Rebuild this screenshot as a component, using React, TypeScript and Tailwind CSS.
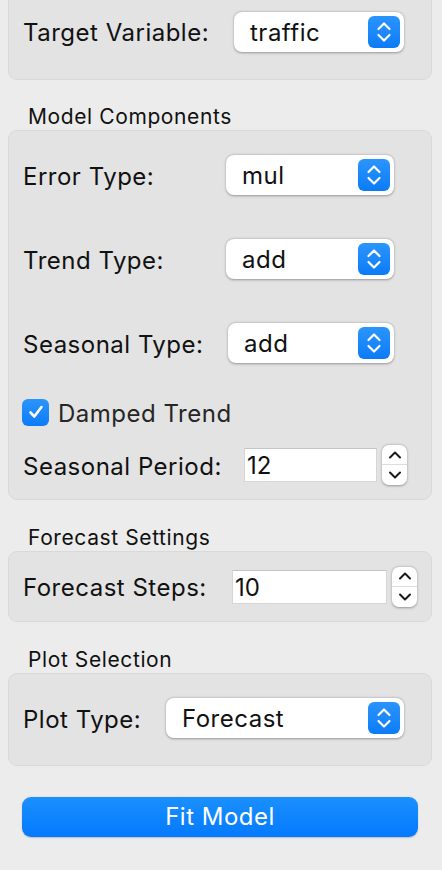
import React from "react";

const font = { fontFamily: "Inter, 'Noto Sans', sans-serif" };

const Chevrons: React.FC<{ color: string; stroke?: number }> = ({ color, stroke = 2.2 }) => (
  <svg width="32" height="32" viewBox="0 0 32 32" fill="none">
    <path d="M10.5 13L16 7.5L21.5 13" stroke={color} strokeWidth={stroke} strokeLinecap="round" strokeLinejoin="round" />
    <path d="M10.5 19L16 24.5L21.5 19" stroke={color} strokeWidth={stroke} strokeLinecap="round" strokeLinejoin="round" />
  </svg>
);

const Combo: React.FC<{ value: string; className: string }> = ({ value, className }) => (
  <div
    className={`h-[40px] bg-white rounded-[8px] shadow-[0_0.5px_2.5px_rgba(0,0,0,0.35)] flex items-center justify-between pl-[16px] pr-[4px] ${className}`}
  >
    <span className="pt-[2px] text-[24px] tracking-[0.5px] text-[#111]">{value}</span>
    <div className="w-[32px] h-[32px] rounded-[6px] bg-gradient-to-b from-[#2a95fd] to-[#0a7bf7] flex items-center justify-center">
      <Chevrons color="#ffffff" />
    </div>
  </div>
);

const SpinBox: React.FC<{ value: string; inputClass: string }> = ({ value, inputClass }) => (
  <div className="flex items-center">
    <div
      className={`h-[34px] bg-white border border-[#d6d6d6] border-t-[#c4c4c4] flex items-center pl-[2px] pt-[2px] text-[24px] text-[#111] ${inputClass}`}
    >
      {value}
    </div>
    <div className="ml-[5px] w-[25px] h-[40px] bg-white rounded-[7px] shadow-[0_0.5px_2.5px_rgba(0,0,0,0.35)] flex flex-col">
      <div className="h-[20px] border-b border-[#dcdcdc] flex items-center justify-center">
        <svg width="16" height="12" viewBox="0 0 16 12" fill="none">
          <path d="M3 8.5L8 3.5L13 8.5" stroke="#1a1a1a" strokeWidth="2" strokeLinecap="round" strokeLinejoin="round" />
        </svg>
      </div>
      <div className="h-[20px] flex items-center justify-center">
        <svg width="16" height="12" viewBox="0 0 16 12" fill="none">
          <path d="M3 3.5L8 8.5L13 3.5" stroke="#1a1a1a" strokeWidth="2" strokeLinecap="round" strokeLinejoin="round" />
        </svg>
      </div>
    </div>
  </div>
);

const Label: React.FC<{ children: React.ReactNode; className?: string }> = ({ children, className = "" }) => (
  <span className={`shrink-0 pt-[3px] text-[24px] tracking-[0.5px] text-[#111] ${className}`}>{children}</span>
);

const Title: React.FC<{ children: React.ReactNode }> = ({ children }) => (
  <div className="h-[22px] pl-[20px] text-[21px] tracking-[0.6px] leading-[22px] text-[#111]">{children}</div>
);

const box = "rounded-[9px] bg-[#e3e3e3] border border-[#d9d9d9]";

const App: React.FC = () => {
  return (
    <div className="w-[442px] h-[870px] bg-[#ececec] overflow-hidden pl-[8px] pr-[10px]" style={font}>
      {/* target */}
      <div className={`${box} -mt-[10px] h-[90px] flex items-center pl-[14px] pb-[7px]`}>
        <Label className="w-[211px]">Target Variable:</Label>
        <Combo value="traffic" className="w-[170px]" />
      </div>

      {/* model components */}
      <div className="mt-[26px]">
        <Title>Model Components</Title>
      </div>
      <div className={`${box} mt-[2px] h-[370px] pl-[14px] pt-[24px]`}>
        <div className="flex items-center h-[40px]">
          <Label className="w-[203px]">Error Type:</Label>
          <Combo value="mul" className="w-[168px]" />
        </div>
        <div className="flex items-center h-[40px] mt-[44px]">
          <Label className="w-[203px]">Trend Type:</Label>
          <Combo value="add" className="w-[168px]" />
        </div>
        <div className="flex items-center h-[40px] mt-[44px]">
          <Label className="w-[205px]">Seasonal Type:</Label>
          <Combo value="add" className="w-[166px]" />
        </div>
        <div className="flex items-center h-[28px] mt-[35px]">
          <div className="-ml-[1px] w-[27px] h-[27px] rounded-[6px] bg-gradient-to-b from-[#2a95fd] to-[#0a7bf7] flex items-center justify-center">
            <svg width="20" height="20" viewBox="0 0 20 20" fill="none">
              <path d="M4.5 10.5L8.3 14.5L15.5 5" stroke="#fff" strokeWidth="2.6" strokeLinecap="round" strokeLinejoin="round" />
            </svg>
          </div>
          <Label className="ml-[9px] text-[#262626]">Damped Trend</Label>
        </div>
        <div className="flex items-center h-[40px] mt-[19px]">
          <Label className="w-[221px]">Seasonal Period:</Label>
          <SpinBox value="12" inputClass="w-[133px]" />
        </div>
      </div>

      {/* forecast settings */}
      <div className="mt-[27px]">
        <Title>Forecast Settings</Title>
      </div>
      <div className={`${box} mt-[2px] h-[71px] flex items-center pl-[14px]`}>
        <Label className="w-[209px]">Forecast Steps:</Label>
        <SpinBox value="10" inputClass="w-[155px]" />
      </div>

      {/* plot selection */}
      <div className="mt-[27px]">
        <Title>Plot Selection</Title>
      </div>
      <div className={`${box} mt-[2px] h-[93px] flex items-center pl-[14px] pb-[3px]`}>
        <Label className="w-[143px]">Plot Type:</Label>
        <Combo value="Forecast" className="w-[238px]" />
      </div>

      <div className="mt-[31px] px-[14px]">
        <button className="w-full h-[40px] rounded-[9px] bg-gradient-to-b from-[#1a90fe] to-[#0579fe] text-white text-[24px] tracking-[0.5px] shadow-[0_0.5px_1.5px_rgba(0,0,0,0.2)]">
          Fit Model
        </button>
      </div>
    </div>
  );
};

export default App;
